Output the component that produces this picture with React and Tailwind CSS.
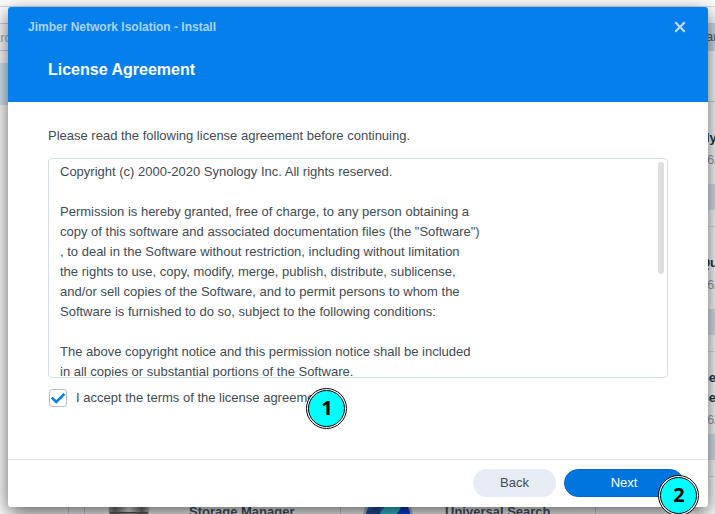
import React from "react";

const LICENSE_LINES = [
  "Copyright (c) 2000-2020 Synology Inc. All rights reserved.",
  "",
  "Permission is hereby granted, free of charge, to any person obtaining a",
  "copy of this software and associated documentation files (the \"Software\")",
  ", to deal in the Software without restriction, including without limitation",
  "the rights to use, copy, modify, merge, publish, distribute, sublicense,",
  "and/or sell copies of the Software, and to permit persons to whom the",
  "Software is furnished to do so, subject to the following conditions:",
  "",
  "The above copyright notice and this permission notice shall be included",
  "in all copies or substantial portions of the Software.",
];

function PackageCard({ title, second, shift }) {
  return (
    <div className="flex h-[125px] flex-col border-b border-[#dfe4ea]">
      <div className={`font-bold leading-5 text-[#2b3644] ${shift} ${second ? "pt-[16px]" : "pt-[26px]"}`}>
        <div>{title}</div>
        {second && <div>{second}</div>}
      </div>
      <div className="mt-[2px] leading-5 text-[#98a2ae]">6/2021</div>
      <div className={`-ml-2 h-[26px] shrink-0 bg-[#dfe6ee] ${second ? "mt-[4px]" : "mt-[14px]"}`} />
    </div>
  );
}

function DiskIcon() {
  return (
    <svg width="42" height="22" viewBox="0 0 42 22">
      <defs>
        <linearGradient id="metal">
          <stop offset="0" stopColor="#b0b0b0" />
          <stop offset=".15" stopColor="#777" />
          <stop offset=".5" stopColor="#f4f4f4" />
          <stop offset=".82" stopColor="#777" />
          <stop offset="1" stopColor="#ccc" />
        </linearGradient>
      </defs>
      <path d="M1 0H41V22H1Z" fill="url(#metal)" />
      <path d="M2 20.7H40" stroke="#5a5a5a" strokeWidth="1.4" />
      <path d="M.5 0V19.5M41.5 0V19.5" stroke="#e8e8e8" />
    </svg>
  );
}

function SearchIcon() {
  return (
    <svg width="50" height="22" viewBox="0 0 50 22">
      <circle cx="25" cy="25" r="25" fill="#b6c6da" />
      <circle cx="25" cy="25" r="22" fill="#3068c8" />
      <path d="M4 19L17 14V22H3Z" fill="#2450a0" />
      <path d="M17 22L22 14L30 11H40L34 22Z" fill="#38c8dc" />
      <path d="M34 22L41 11Q47 16 47 22Z" fill="#0b40dd" />
    </svg>
  );
}

function Backdrop() {
  return (
    <div className="flex h-[514px] flex-col overflow-hidden bg-white">
      <div className="h-[7px] shrink-0 border-b border-[#d3dce6]" />
      <div className="flex min-h-0 flex-1">
        <div className="flex w-[69px] shrink-0 flex-col border-r border-[#d3dce6] pt-4">
          <div className="h-7 border-y border-[#c9d5e0] leading-[28px] text-[#a3abb4]">
            <span className="-ml-[7px]">arch</span>
          </div>
          <div className="mt-3 h-[42px] bg-[#d7e8f8]" />
        </div>
        <div className="flex min-w-0 flex-1 flex-col justify-end pl-[15px]">
          <div className="flex h-[22px] font-bold text-[#4b5768]">
            <div className="flex w-[256px] border-l border-[#cfd8e2] pl-[23px]">
              <DiskIcon />
              <span className="ml-[39px] mt-[10px] whitespace-nowrap leading-5">Storage Manager</span>
            </div>
            <div className="flex w-[256px] border-x border-[#cfd8e2] pl-[22px]">
              <SearchIcon />
              <span className="ml-[32px] mt-[10px] whitespace-nowrap leading-5">Universal Search</span>
            </div>
          </div>
        </div>
        <div className="w-[8px] shrink-0 pt-4">
          <div className="-ml-2 h-7 bg-[#d7dfe8] pl-[7px] leading-7 text-[#4b5768]">anual</div>
          <div className="h-[51px] border-b border-[#cfd5dc]" />
          <PackageCard title="ly" shift="-ml-[1px]" />
          <PackageCard title="Qu" shift="-ml-[7px]" />
          <PackageCard title="Se" second="Se" shift="-ml-[7px]" />
        </div>
      </div>
    </div>
  );
}

function Marker({ n, place }) {
  return (
    <div className={`absolute flex size-[41px] items-center justify-center rounded-full border border-black bg-white p-[1px] ${place}`}>
      <div className="flex size-full items-center justify-center rounded-full border-[1.5px] border-black bg-[#00ffff] pb-[2px] font-['Open_Sans',sans-serif] text-[20px] font-bold leading-none text-black">
        {n}
      </div>
    </div>
  );
}

export default function App() {
  return (
    <div className="relative h-[514px] w-[715px] overflow-hidden font-['Liberation_Sans',Arial,sans-serif] text-[13px] text-[#414b55]">
      <Backdrop />
      <div className="absolute left-2 top-[7px] flex h-[500px] w-[700px] flex-col overflow-hidden rounded-[3px] bg-white shadow-[0_6px_20px_rgba(0,0,0,0.65)]">
        <header className="h-[95px] shrink-0 bg-[#057feb]">
          <div className="flex h-10 items-center justify-between pl-5 pr-[22px]">
            <span className="text-[12px] font-bold text-[#a8d3fa]">Jimber Network Isolation - Install</span>
            <svg width="12" height="12" viewBox="0 0 12 12" stroke="#bcdcfa" strokeWidth="2.2">
              <path d="M1.3 1.3L10.7 10.7M10.7 1.3L1.3 10.7" />
            </svg>
          </div>
          <h1 className="pl-10 pt-[11px] text-[16px] font-bold leading-6 text-white">License Agreement</h1>
        </header>
        <main className="flex flex-1 flex-col px-10 pt-6">
          <p className="leading-5">Please read the following license agreement before continuing.</p>
          <div className="mt-3 flex h-[220px] justify-between overflow-hidden rounded-[4px] border border-[#d3dde6] pl-[11px] pr-[3px] pt-[3px]">
            <div>
              {LICENSE_LINES.map((line, i) => (
                <div key={i} className="h-5 whitespace-pre leading-5">{line}</div>
              ))}
            </div>
            <div className="h-[112px] w-[6px] rounded-[3px] bg-[#dedede]" />
          </div>
          <label className="mt-[10px] flex h-5 items-center">
            <span className="ml-px flex size-[18px] items-center justify-center rounded-[3px] border border-[#b8c0cb] bg-white">
              <svg width="16" height="16" viewBox="0 0 16 16" fill="none" stroke="#057feb" strokeWidth="2.6">
                <path d="M1.8 7.6L6.3 12L14.4 3.9" />
              </svg>
            </span>
            <span className="ml-[9px]">I accept the terms of the license agreement.</span>
          </label>
        </main>
        <footer className="flex h-12 shrink-0 items-center justify-end gap-2 border-t border-[#e1e5e8] pb-px pr-6">
          <button className="h-7 w-[83px] rounded-full bg-[#e7ecf4]">Back</button>
          <button className="h-7 w-[120px] rounded-full border border-[#0868c5] bg-[#0075dd] text-white">Next</button>
        </footer>
      </div>
      <Marker n="1" place="left-[306.4px] top-[388.4px]" />
      <Marker n="2" place="left-[658.4px] top-[475.4px]" />
    </div>
  );
}
